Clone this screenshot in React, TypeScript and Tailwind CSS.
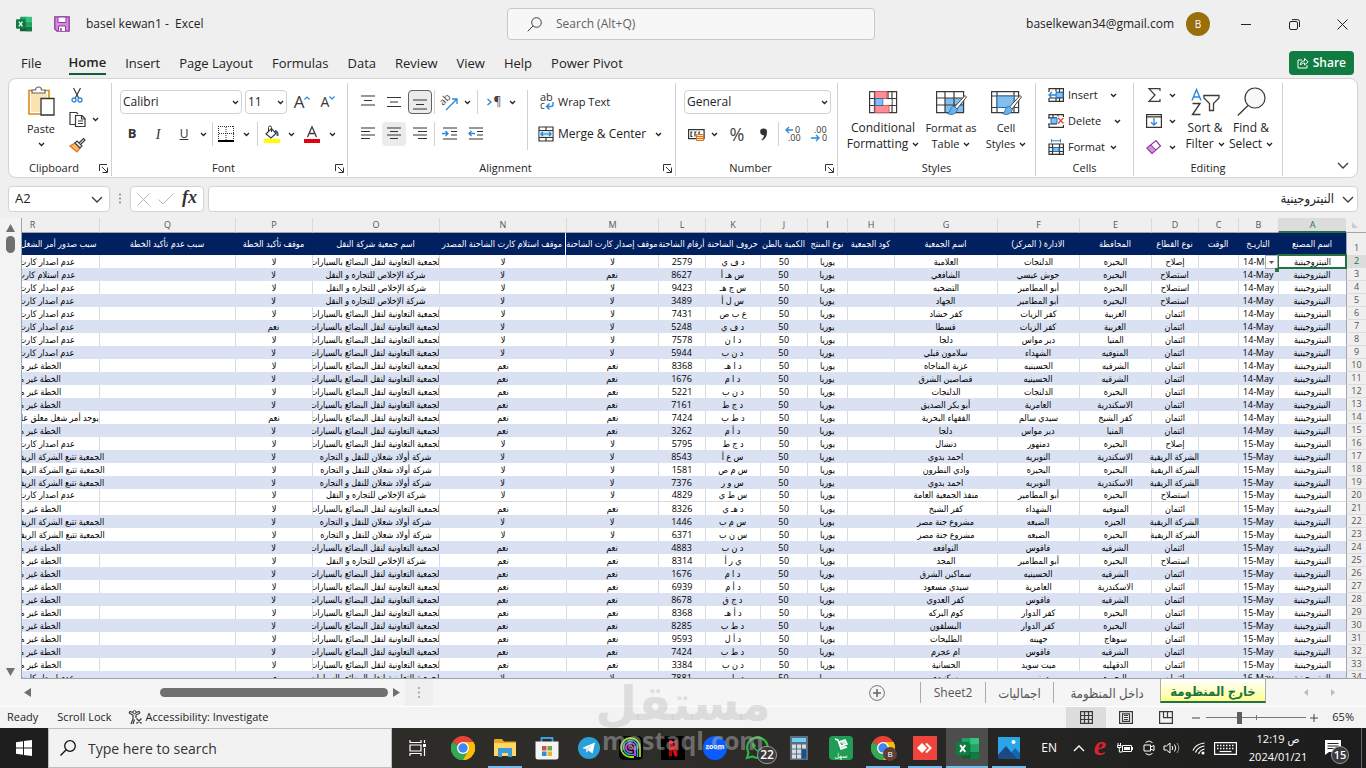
import type { ReactNode } from "react";
import clsx from "clsx";

/* ---------------- DATA ---------------- */

const COOP = "الجمعية التعاونية لنقل البضائع بالسيارات";
const IKHLAS = "شركة الإخلاص للتجاره و النقل";
const SHAALAN = "شركة أولاد شعلان للنقل و التجاره";
const RURAL = "الشركة الريفية";
const NO_CARD = "عدم اصدار كارت الشاحنة";
const NO_RECEIPT = "عدم استلام كارت الشاحنة";
const PLAN = "الخطة غير مؤكدة";
const PENDING = "يوجد أمر شغل معلق علي نفس الشاحنة";
const FOLLOWS = "الجمعية تتبع الشركة الريفية المصرية للتنمية";

const columns = [
  { id: "A", title: "اسم المصنع", width: "w-[68px]" },
  { id: "B", title: "التاريـخ", width: "w-[40px]" },
  { id: "C", title: "الوقت", width: "w-[40px]" },
  { id: "D", title: "نوع القطاع", width: "w-[47px]" },
  { id: "E", title: "المحافظة", width: "w-[72px]" },
  { id: "F", title: "الادارة ( المركز)", width: "w-[82px]" },
  { id: "G", title: "اسم الجمعية", width: "w-[103px]" },
  { id: "H", title: "كود الجمعية", width: "w-[47px]" },
  { id: "I", title: "نوع المنتج", width: "w-[40px]" },
  { id: "J", title: "الكمية بالطن", width: "w-[47px]" },
  { id: "K", title: "حروف الشاحنة", width: "w-[55px]" },
  { id: "L", title: "أرقام الشاحنة", width: "w-[47px]" },
  { id: "M", title: "موقف إصدار كارت الشاحنة", width: "w-[92px]" },
  { id: "N", title: "موقف استلام كارت الشاحنة المصدر", width: "w-[127px]" },
  { id: "O", title: "اسم جمعية شركة النقل", width: "w-[127px]" },
  { id: "P", title: "موقف تأكيد الخطة", width: "w-[77px]" },
  { id: "Q", title: "سبب عدم تأكيد الخطة", width: "w-[136px]" },
  { id: "R", title: "سبب صدور أمر الشغل للشاحنة الحالية", width: "w-[134px]" },
];

// sector, governorate, district, society, letters, number, issued, received, carrier, confirmed, reason
const records: string[][] = [
  ["إصلاح", "البحيره", "الدلنجات", "العلامية", "د ف ي", "2579", "لا", "لا", COOP, "لا", NO_CARD],
  ["استصلاح", "البحيره", "حوش عيسي", "الشافعي", "س هـ أ", "8627", "نعم", "لا", IKHLAS, "لا", NO_RECEIPT],
  ["استصلاح", "البحيره", "أبو المطامير", "التضحيه", "س ج هـ", "9423", "لا", "لا", IKHLAS, "لا", NO_CARD],
  ["استصلاح", "البحيره", "أبو المطامير", "الجهاد", "س ل أ", "3489", "لا", "لا", IKHLAS, "لا", NO_CARD],
  ["ائتمان", "الغربية", "كفر الزيات", "كفر حشاد", "ع ب ص", "7431", "لا", "لا", COOP, "لا", NO_CARD],
  ["ائتمان", "الغربية", "كفر الزيات", "قسطا", "د ف ي", "5248", "لا", "لا", COOP, "نعم", NO_CARD],
  ["ائتمان", "المنيا", "دير مواس", "دلجا", "د ا ن", "7578", "لا", "لا", COOP, "لا", NO_CARD],
  ["ائتمان", "المنوفيه", "الشهداء", "سلامون قبلي", "د ن ب", "5944", "لا", "لا", COOP, "لا", NO_CARD],
  ["ائتمان", "الشرقيه", "الحسينيه", "عزبة المناجاه", "د ا هـ", "8368", "نعم", "نعم", COOP, "لا", PLAN],
  ["ائتمان", "الشرقيه", "الحسينيه", "قصاصين الشرق", "د ا م", "1676", "نعم", "نعم", COOP, "لا", PLAN],
  ["ائتمان", "البحيره", "الدلنجات", "الدلنجات", "د ن ب", "5221", "نعم", "نعم", COOP, "لا", PLAN],
  ["ائتمان", "الاسكندرية", "العامرية", "أبو بكر الصديق", "د ج ط", "7161", "نعم", "نعم", COOP, "لا", PLAN],
  ["ائتمان", "كفر الشيخ", "سيدي سالم", "الفقهاء البحرية", "د ط ب", "7424", "نعم", "نعم", COOP, "نعم", PENDING],
  ["ائتمان", "المنيا", "دير مواس", "دلجا", "د أ م", "3262", "نعم", "نعم", COOP, "لا", PLAN],
  ["إصلاح", "البحيره", "دمنهور", "دنشال", "د ج ط", "5795", "لا", "لا", COOP, "لا", NO_CARD],
  [RURAL, "الاسكندرية", "النوبريه", "احمد بدوي", "س ع أ", "8543", "لا", "لا", SHAALAN, "لا", FOLLOWS],
  [RURAL, "البحيره", "البحيره", "وادي النطرون", "س م ص", "1581", "لا", "لا", SHAALAN, "لا", FOLLOWS],
  [RURAL, "الاسكندرية", "النوبريه", "احمد بدوي", "س و ر", "7376", "لا", "لا", SHAALAN, "لا", FOLLOWS],
  ["استصلاح", "البحيره", "أبو المطامير", "منفذ الجمعية العامة", "س ط ي", "4829", "لا", "لا", IKHLAS, "لا", NO_CARD],
  ["ائتمان", "المنوفيه", "الشهداء", "كفر الشيخ", "د هـ ي", "8326", "نعم", "نعم", COOP, "لا", PLAN],
  [RURAL, "الجيزه", "الضبعه", "مشروع جنة مصر", "س م ب", "1446", "لا", "لا", SHAALAN, "لا", FOLLOWS],
  [RURAL, "البحيره", "الضبعه", "مشروع جنة مصر", "س ن ب", "6371", "لا", "لا", SHAALAN, "لا", FOLLOWS],
  ["ائتمان", "الشرقيه", "فاقوس", "النوافعه", "د ن ب", "4883", "نعم", "نعم", COOP, "لا", PLAN],
  ["استصلاح", "البحيره", "أبو المطامير", "المجد", "ي ر أ", "8314", "نعم", "نعم", IKHLAS, "لا", PLAN],
  ["ائتمان", "الشرقيه", "الحسينيه", "سماكين الشرق", "د ا م", "1676", "نعم", "نعم", COOP, "لا", PLAN],
  ["ائتمان", "الاسكندرية", "العامرية", "سيدي مسعود", "د أ م", "6939", "نعم", "نعم", COOP, "لا", PLAN],
  ["ائتمان", "الشرقيه", "فاقوس", "كفر العدوي", "د ج ق", "8678", "نعم", "نعم", COOP, "لا", PLAN],
  ["ائتمان", "البحيره", "كفر الدوار", "كوم البركه", "د أ هـ", "8368", "نعم", "نعم", COOP, "لا", PLAN],
  ["ائتمان", "البحيره", "كفر الدوار", "البسلقون", "د ط ب", "8285", "نعم", "نعم", COOP, "لا", PLAN],
  ["ائتمان", "سوهاج", "جهينه", "الطليحات", "د أ ل", "9593", "نعم", "نعم", COOP, "لا", PLAN],
  ["ائتمان", "الشرقيه", "فاقوس", "ام عجرم", "د ط ب", "7424", "نعم", "نعم", COOP, "لا", PLAN],
  ["ائتمان", "الدقهليه", "ميت سويد", "الحسانية", "د ن ب", "3384", "نعم", "نعم", COOP, "لا", PLAN],
  ["ائتمان", "البحيره", "دمنهور", "سكنيده", "د ط ب", "7881", "لا", "لا", COOP, "نعم", NO_CARD],
];

const rows = records.map((r, i) => {
  const n = i + 2;
  const date = n < 16 ? "14-May" : n < 34 ? "15-May" : "16-May";
  return {
    n,
    banded: n < 20 ? n % 2 === 1 : n > 21 && n % 2 === 0,
    cells: ["النيتروجينية", date, "", r[0], r[1], r[2], r[3], "", "يوريا", "50", r[4], r[5], r[6], r[7], r[8], r[9], "", r[10]],
  };
});

/* ---------------- SMALL ICONS ---------------- */

type SvgProps = { w: number; h: number; children: ReactNode; className?: string };

function Svg({ w, h, children, className }: SvgProps) {
  return (
    <svg
      width={w}
      height={h}
      viewBox={`0 0 ${w} ${h}`}
      fill="none"
      stroke="#3b3a39"
      strokeWidth="1"
      aria-hidden="true"
      className={clsx("shrink-0 overflow-visible", className)}
    >
      {children}
    </svg>
  );
}

function Chevron({ className }: { className?: string }) {
  return (
    <Svg w={7} h={5} className={className}>
      <path d="M1 1l2.5 2.5L6 1" strokeWidth="1.3" stroke="#222" />
    </Svg>
  );
}

function BigChevron() {
  return (
    <Svg w={12} h={7}>
      <path d="M1 1l5 5 5-5" strokeWidth="1.3" />
    </Svg>
  );
}

function Drop({ label, className }: { label: string; className?: string }) {
  return (
    <button aria-label={label} className={clsx("flex h-6 items-center justify-center", className ?? "w-3")}>
      <Chevron />
    </button>
  );
}

function Tool({ label, className, children }: { label: string; className?: string; children: ReactNode }) {
  return (
    <button
      aria-label={label}
      className={clsx("flex h-6 shrink-0 items-center justify-center rounded", className ?? "w-6")}
    >
      {children}
    </button>
  );
}

function Sep({ className }: { className?: string }) {
  return <span className={clsx("h-6 w-px shrink-0 bg-[#d1d1d1]", className)} />;
}

function Lines({ d }: { d: string }) {
  return (
    <Svg w={14} h={14}>
      <path d={d} strokeWidth="1.2" stroke="#333" />
    </Svg>
  );
}

function Group({ name, launcher, className, children }: { name: string; launcher?: boolean; className: string; children: ReactNode }) {
  return (
    <section aria-label={name} className={clsx("mt-1 mb-px flex flex-col border-r border-[#d1d1d1]", className)}>
      <div className="flex flex-1">{children}</div>
      <div className="flex h-4 items-center">
        <span className="flex-1 text-center">{name}</span>
        {launcher && (
          <button aria-label={`${name} settings`} className="mr-[3px]">
            <Svg w={9} h={9}>
              <path d="M.5 7V.5H8M3 3l5 5M8.500 3.500v5H3.500" stroke="#333" />
            </Svg>
          </button>
        )}
      </div>
    </section>
  );
}

/* ---------------- TITLE BAR ---------------- */

function ExcelLogo({ size }: { size: number }) {
  return (
    <svg width={size} height={size} viewBox="0 0 24 24" aria-hidden="true">
      <path d="M7 1h9v7H6V2a1 1 0 0 1 1-1z" fill="#21a366" />
      <path d="M15 1h8a1 1 0 0 1 1 1v6h-9z" fill="#33c481" />
      <path d="M6 8h9v8H6z" fill="#107c41" />
      <path d="M15 8h9v8h-9z" fill="#21a366" />
      <path d="M6 16h18v6a1 1 0 0 1-1 1H7a1 1 0 0 1-1-1z" fill="#185c37" />
      <path d="M15 16h9v6a1 1 0 0 1-1 1h-8z" fill="#107c41" />
      <rect x="0" y="5" width="14" height="14" rx="1.500" fill="#107c41" />
      <path d="M4.300 8.500l5.400 7M9.700 8.500l-5.400 7" stroke="#fff" strokeWidth="1.900" />
    </svg>
  );
}

function TitleBar() {
  return (
    <header className="grid h-12 shrink-0 grid-cols-[1fr_368px_1fr] items-center pl-4">
      <div className="flex items-center">
        <ExcelLogo size={16} />
        <button aria-label="Save" className="ml-[22px]">
          <Svg w={16} h={16}>
            <path d="M.8.800h14.400v14.400H3L.8 13z" fill="#d68be0" stroke="#8b3a99" strokeWidth="1.300" />
            <path d="M4 1h8v5.500H4z" fill="#fff" stroke="#8b3a99" />
            <path d="M4.500 15v-5h7v5" fill="#fff" stroke="#8b3a99" />
            <path d="M7 12v3" stroke="#8b3a99" strokeWidth="1.500" />
          </Svg>
        </button>
        <h1 className="ml-4 text-[12px] whitespace-pre">basel kewan1 -  Excel</h1>
      </div>
      <label className="flex h-8 items-center rounded border border-[#c8c8c8] bg-[#f7f7f7] pl-[19px]">
        <Svg w={15} h={15}>
          <circle cx="9.500" cy="5.500" r="4.800" />
          <path d="M6 9L.7 14.300" />
        </Svg>
        <input aria-label="Search" placeholder="Search (Alt+Q)" className="ml-3.5 flex-1 bg-transparent text-[12px] outline-none placeholder:text-[#616161]" />
      </label>
      <div className="flex items-center justify-end">
        <span className="text-[12px]">baselkewan34@gmail.com</span>
        <button className="ml-3 size-6 rounded-full bg-[#986f0b] text-[10px] text-white">B</button>
        <button aria-label="Minimize" className="flex h-12 w-[60px] items-center justify-center pl-3">
          <Svg w={10} h={10}><path d="M0 5.500h10" stroke="#222" /></Svg>
        </button>
        <button aria-label="Restore" className="flex h-12 w-12 items-center justify-center">
          <Svg w={11} h={11}>
            <rect x=".5" y="2.500" width="8" height="8" rx="1.500" stroke="#222" />
            <path d="M3 .6h5.500a2 2 0 0 1 2 2V8" stroke="#222" />
          </Svg>
        </button>
        <button aria-label="Close" className="flex h-12 w-12 items-center justify-center">
          <Svg w={11} h={11}><path d="M.5.500l10 10M10.500.500l-10 10" stroke="#222" /></Svg>
        </button>
      </div>
    </header>
  );
}

/* ---------------- RIBBON ---------------- */

const tabs = ["File", "Home", "Insert", "Page Layout", "Formulas", "Data", "Review", "View", "Help", "Power Pivot"];

function RibbonTabs() {
  return (
    <nav className="flex h-[30px] shrink-0 items-start gap-[19px] pl-[21px] pr-3 text-[13px]">
      {tabs.map((tab) => (
        <button
          key={tab}
          className={clsx(
            "h-[27px] pt-[3px] leading-[22px]",
            tab === "File" && "mr-2",
            tab === "Home" && "border-b-2 border-[#185c37] font-semibold"
          )}
        >
          {tab}
        </button>
      ))}
      <button className="ml-auto mt-[3px] flex h-6 items-center gap-1 rounded bg-[#107c41] pr-2 pl-2 text-[12px] font-semibold text-white">
        <Svg w={12} h={12}>
          <path d="M5 3H1v8h9V8" stroke="#fff" />
          <path d="M3.500 8C3.500 5 5 4 7.500 4V1.500l3.700 3.300-3.700 3.200V6C6 6 4.500 6.500 3.500 8z" stroke="#fff" />
        </Svg>
        Share
      </button>
    </nav>
  );
}

function ClipboardGroup() {
  return (
    <Group name="Clipboard" launcher className="w-[103px]">
      <button className="ml-4 flex w-8 flex-col items-center whitespace-nowrap">
        <Svg w={28} h={32} className="mt-[3px]">
          <path d="M8 4.500H2V28h12M17 4.500h5V12" stroke="#d68a1a" strokeWidth="1.600" />
          <path d="M4 7h16v5h-6v14H4z" fill="#fbe3b4" stroke="none" />
          <path d="M5 7V4h3.500a3 3 0 0 1 6 0H18v3z" fill="#fff" stroke="#666" strokeWidth="1.200" />
          <path d="M14 12.500h13V29H14z" fill="#fff" stroke="#333" strokeWidth="1.300" />
        </Svg>
        <span className="mt-0.5 leading-[18px]">Paste</span>
        <Chevron className="mt-1" />
      </button>
      <div className="ml-2 flex flex-col">
        <Tool label="Cut">
          <Svg w={14} h={16}>
            <path d="M3.500 1l5.200 10M10.500 1L5.300 11" strokeWidth="1.200" />
            <circle cx="4" cy="13" r="2" stroke="#2b88d8" strokeWidth="1.300" />
            <circle cx="10" cy="13" r="2" stroke="#2b88d8" strokeWidth="1.300" />
          </Svg>
        </Tool>
        <div className="flex">
          <Tool label="Copy">
            <Svg w={17} h={17}>
              <path d="M6 13.500H1V1.500h6.500L9 3" strokeWidth="1.200" />
              <path d="M6.500 4.500H13l3 3V15.500H6.500zM12.500 4.500v3.500H16M9 10h5M9 12.500h5" strokeWidth="1.200" />
            </Svg>
          </Tool>
          <Drop label="Copy options" />
        </div>
        <Tool label="Format Painter" className="mt-0.5 w-6">
          <Svg w={17} h={16}>
            <path d="M1 9l5-3 5 5-3 4z" fill="#f7b96b" stroke="#d9731a" strokeWidth="1.200" />
            <path d="M6 6l2-2 5 5-2 2zM10 6l4.500-4.500 1.500 1.500L12 7" fill="#fff" strokeWidth="1.200" />
          </Svg>
        </Tool>
      </div>
    </Group>
  );
}

const selectBox = "flex h-6 items-center rounded border border-[#d1d1d1] bg-white pr-0.5 text-[12px]";
const selectField = "min-w-0 flex-1 appearance-none bg-transparent pl-0.5 outline-none";

function FontGroup() {
  return (
    <Group name="Font" launcher className="w-[236px]">
      <div className="mt-[7px] ml-2 flex flex-col gap-2">
        <div className="flex items-center">
          <label className={clsx(selectBox, "w-[122px]")}>
            <select aria-label="Font name" className={selectField}><option>Calibri</option></select>
            <Chevron />
          </label>
          <label className={clsx(selectBox, "ml-[3px] w-[42px]")}>
            <select aria-label="Font size" className={selectField}><option>11</option></select>
            <Chevron />
          </label>
          <Tool label="Increase font size" className="ml-0.5 w-[26px]">
            <span className="text-[17px] leading-5 text-[#3b3a39]">A</span>
            <Svg w={6} h={4} className="mb-2"><path d="M.5 3.500L3 1l2.500 2.500" stroke="#2b88d8" strokeWidth="1.200" /></Svg>
          </Tool>
          <Tool label="Decrease font size" className="w-[26px]">
            <span className="text-[14px] leading-5 text-[#3b3a39]">A</span>
            <Svg w={6} h={4} className="mb-2"><path d="M.5.500L3 3 5.500.500" stroke="#2b88d8" strokeWidth="1.200" /></Svg>
          </Tool>
        </div>
        <div className="flex items-center">
          <Tool label="Bold"><b className="text-[13px] text-[#333]">B</b></Tool>
          <Tool label="Italic" className="ml-0.5 w-6"><i className="font-['Liberation_Serif',serif] text-[14px] text-[#333]">I</i></Tool>
          <Tool label="Underline" className="ml-0.5 w-6"><u className="text-[12px] text-[#333]">U</u></Tool>
          <Drop label="Underline options" className="w-3.5" />
          <Sep className="mx-0.5" />
          <Tool label="Borders" className="w-[22px]">
            <Svg w={16} h={16}>
              <path d="M.5 0v14M15.500 0v14M0 .5h16M8 1v13M1 7.500h15" strokeDasharray="1 1" stroke="#333" />
              <path d="M0 15h16" stroke="#000" strokeWidth="2" />
            </Svg>
          </Tool>
          <Drop label="Border options" className="w-[18px]" />
          <Sep className="mx-0.5" />
          <Tool label="Fill color">
            <Svg w={18} h={17}>
              <path d="M3 8l5.500-5.500 4.500 5L8 12z" strokeWidth="1.200" />
              <path d="M8.500 6V1.500a1.500 1.500 0 0 0-3 0V5" />
              <path d="M12 5c2 0 3 2 2.500 5" stroke="#1f5f9c" strokeWidth="2" />
              <path d="M1 13h16v4H1z" fill="#ffff00" stroke="none" />
            </Svg>
          </Tool>
          <Drop label="Fill options" className="w-3.5" />
          <Tool label="Font color" className="ml-0.5 w-6">
            <Svg w={16} h={17}>
              <path d="M3.500 11L8 .8 12.500 11M5 7.500h6" strokeWidth="1.300" />
              <path d="M0 13h16v4H0z" fill="#e3000f" stroke="none" />
            </Svg>
          </Tool>
          <Drop label="Font color options" className="w-4" />
        </div>
      </div>
    </Group>
  );
}

function AlignmentGroup() {
  return (
    <Group name="Alignment" launcher className="w-[328px]">
      <div className="mt-[7px] ml-2 flex w-[171px] flex-col gap-2">
        <div className="flex items-center">
          <Tool label="Top align"><Lines d="M0 1h14M3 5.500h8M0 10h14" /></Tool>
          <Tool label="Middle align" className="ml-0.5 w-6"><Lines d="M0 2.500h14M3 7h8M0 11.500h14" /></Tool>
          <Tool label="Bottom align" className="ml-0.5 w-6 border border-[#616161] bg-[#ebebeb]"><Lines d="M0 5h14M3 9.500h8M0 14h14" /></Tool>
          <Sep className="mx-0.5" />
          <Tool label="Orientation">
            <Svg w={18} h={17}>
              <text x="3" y="12" fontSize="10" transform="rotate(-45 3 12)" fill="#444" stroke="none">ab</text>
              <path d="M6 16L16.500 5.500M12 5h5v5" stroke="#2b88d8" strokeWidth="1.300" />
            </Svg>
          </Tool>
          <Drop label="Orientation options" className="w-3" />
          <Sep className="mx-1" />
          <Tool label="Text direction" className="w-6 gap-0.5">
            <Svg w={5} h={8}><path d="M.5 1L4 4 .5 7" stroke="#2b88d8" strokeWidth="1.400" /></Svg>
            <span className="text-[12px] text-[#444]">¶</span>
          </Tool>
          <Drop label="Direction options" className="w-3" />
        </div>
        <div className="flex items-center">
          <Tool label="Align left"><Lines d="M0 1h14M0 4.500h9M0 8h14M0 11.500h9" /></Tool>
          <Tool label="Center" className="ml-0.5 w-6 bg-[#ebebeb]"><Lines d="M0 1h14M3 4.500h8M0 8h14M3 11.500h8" /></Tool>
          <Tool label="Align right" className="ml-0.5 w-6"><Lines d="M0 1h14M5 4.500h9M0 8h14M5 11.500h9" /></Tool>
          <Sep className="mx-0.5" />
          <Tool label="Decrease indent">
            <Svg w={15} h={14}>
              <path d="M1 1h14M9 4.500h6M9 8h6M1 12h14" strokeWidth="1.200" stroke="#333" />
              <path d="M0 6.500h6M3.500 4L6 6.500 3.500 9" stroke="#2b88d8" strokeWidth="1.400" />
            </Svg>
          </Tool>
          <Tool label="Increase indent" className="ml-0.5 w-6">
            <Svg w={15} h={14}>
              <path d="M1 1h14M9 4.500h6M9 8h6M1 12h14" strokeWidth="1.200" stroke="#333" />
              <path d="M7 6.500H1M3.500 4L1 6.500 3.500 9" stroke="#2b88d8" strokeWidth="1.400" />
            </Svg>
          </Tool>
        </div>
      </div>
      <div className="mt-[7px] mb-2.5 flex flex-col gap-2 border-l border-[#d1d1d1] pl-3">
        <button className="flex h-6 items-center gap-1 text-[12px] text-[#222]">
          <Svg w={14} h={18}>
            <text x="0" y="8" fontSize="11" fill="#333" stroke="none">ab</text>
            <text x="0" y="16" fontSize="10" fill="#333" stroke="none">c</text>
            <path d="M13 9v2.500q0 2-2 2H7M9.500 10.500l-3 3 3 3" stroke="#2b88d8" strokeWidth="1.400" />
          </Svg>
          <span className="text-[11px]">Wrap Text</span>
        </button>
        <div className="flex items-center">
          <button className="flex h-6 items-center gap-1 whitespace-nowrap text-[#222]">
            <Svg w={16} h={16} className="-ml-0.5">
              <path d="M1 1h14v14H1zM1 4.500h14M1 11.500h14M8 1v3.500M8 11.500V15" strokeWidth="1.200" stroke="#333" />
              <path d="M1.600 5h12.800v6H1.600z" fill="#cfe8fb" stroke="none" />
              <path d="M3 8h10M5 6L3 8l2 2M11 6l2 2-2 2" stroke="#1f7fc4" strokeWidth="1.200" />
            </Svg>
            <span className="text-[12px]">Merge &amp; Center</span>
          </button>
          <Drop label="Merge options" className="ml-1.5 w-3" />
        </div>
      </div>
    </Group>
  );
}

function NumberGroup() {
  return (
    <Group name="Number" launcher className="w-[162px]">
      <div className="mt-[7px] mx-2 flex flex-1 flex-col gap-2">
        <label className={selectBox}>
          <select aria-label="Number format" className={selectField}><option>General</option></select>
          <Chevron />
        </label>
        <div className="flex items-center">
          <Tool label="Accounting format">
            <Svg w={17} h={15}>
              <path d="M.6 2.600h15.500v9H.6zM4.500 5H3v4.500h1.500M8.500 5H7v4.500M12 5h-1v2" strokeWidth="1.200" stroke="#333" />
              <path d="M8.500 7.500h7V13.500h-7zM8.500 9.500h7M8.500 11.500h7" fill="#fde3c3" stroke="#d9731a" />
            </Svg>
          </Tool>
          <Drop label="Accounting options" className="w-3" />
          <Tool label="Percent style" className="ml-1 w-[26px]"><span className="text-[18px] text-[#444]">%</span></Tool>
          <Tool label="Comma style" className="w-[26px]">
            <Svg w={9} h={13}>
              <path d="M4.500.500a3.300 3.300 0 0 1 3.500 4c0 4-2 6.500-5 8l-.6-.8C4.200 10.500 5 9 5 7.300 2.800 7.600 1.200 6 1.200 4a3.300 3.300 0 0 1 3.300-3.500z" fill="#333" stroke="none" />
            </Svg>
          </Tool>
          <Sep className="mx-0.5" />
          <Tool label="Increase decimal">
            <Svg w={17} h={16}>
              <text x="10" y="7" fontSize="9" fill="#333" stroke="none">0</text>
              <text x="3" y="15" fontSize="9" fill="#333" stroke="none">.00</text>
              <path d="M8 4H1M4 1L1 4l3 3" stroke="#2b88d8" strokeWidth="1.300" />
            </Svg>
          </Tool>
          <Tool label="Decrease decimal" className="ml-0.5 w-6">
            <Svg w={17} h={16}>
              <text x="3" y="7" fontSize="9" fill="#333" stroke="none">.00</text>
              <text x="11" y="15" fontSize="9" fill="#333" stroke="none">0</text>
              <path d="M0 12h8M5 9l3 3-3 3" stroke="#2b88d8" strokeWidth="1.300" />
            </Svg>
          </Tool>
        </div>
      </div>
    </Group>
  );
}

function BigButton({ icon, top, bottom, className }: { icon: ReactNode; top: string; bottom: string; className: string }) {
  return (
    <button className={clsx("flex flex-col items-center whitespace-nowrap leading-4", className)}>
      <span className="flex h-[37px] items-center">{icon}</span>
      <span>{top}</span>
      <span className="flex items-center gap-1">{bottom}<Chevron /></span>
    </button>
  );
}

function Brush() {
  return (
    <>
      <path d="M30 7.500L19.500 19l2.500 2L31.500 9z" fill="#fff" stroke="#444" />
      <path d="M19.500 18.500c-3-.5-4 2-4.500 4.500-.5 1.500-2 2-3 2 3 2.500 9 2 10.500-3.500z" fill="#6cb3ea" stroke="#2672b8" />
    </>
  );
}

function StylesGroup() {
  return (
    <Group name="Styles" className="w-[198px]">
      <BigButton
        className="ml-2 w-[74px] text-[12px]"
        top="Conditional"
        bottom="Formatting"
        icon={
          <Svg w={28} h={24}>
            <path d="M.6 1.600h27v21H.6zM.6 8.500h27M.6 15.500h27M5.500 1.600v21M19 1.600v21M23 1.600v21" strokeWidth="1.200" />
            <path d="M6 1.600h12v6.900H6zM6 15.500h14v7H6z" fill="#ff8d96" stroke="#e05560" />
            <path d="M6 8.500h8v7H6z" fill="#83beec" stroke="#2672b8" />
            <path d="M14.500 9.200h8v5.600h-8z" fill="#fff" stroke="none" />
          </Svg>
        }
      />
      <BigButton
        className="w-[62px] text-[11px]"
        top="Format as"
        bottom="Table"
        icon={
          <Svg w={32} h={28}>
            <path d="M10 10h18v14H10z" fill="#83beec" stroke="none" />
            <path d="M1.600 3.600h27v21h-27zM1.600 10h27M1.600 17h27M10 3.600v21M19 3.600v21" strokeWidth="1.200" />
            <Brush />
          </Svg>
        }
      />
      <BigButton
        className="w-12 text-[11px]"
        top="Cell"
        bottom="Styles"
        icon={
          <Svg w={32} h={28}>
            <path d="M1.600 3.600h27v21h-27zM1.600 8h27M1.600 19.500h27M7 3.600v21M24 3.600v21" strokeWidth="1.200" />
            <path d="M7 8h17v11.500H7z" fill="#83beec" stroke="#2672b8" />
            <Brush />
          </Svg>
        }
      />
    </Group>
  );
}

function CellsGroup() {
  return (
    <Group name="Cells" className="w-[98px]">
      <div className="ml-3 flex flex-col gap-0.5">
        <div className="flex items-center">
          <button className="flex h-6 items-center gap-1">
            <Svg w={16} h={14}>
              <path d="M1 4V.6h14.400v12.800H1V10M8 .6v3M8 10v3.400M11.500.6v12.800M8 4.300h7.400M1 10h14.400" strokeWidth="1.200" stroke="#333" />
              <path d="M8 4.500h7v5H8z" fill="#83beec" stroke="#2672b8" />
              <path d="M8 7H1M4 4L1 7l3 3" stroke="#2b88d8" strokeWidth="1.300" />
            </Svg>
            Insert
          </button>
          <Drop label="Insert options" className="ml-2 w-4" />
        </div>
        <div className="flex items-center">
          <button className="flex h-6 items-center gap-1">
            <Svg w={16} h={14}>
              <path d="M1 3.500V.6h14.400V3M1 10v3.400h14.400V11M0 3.800h9M0 10h9M5 .6v3M10 .6v2" strokeWidth="1.200" stroke="#333" />
              <path d="M3 4h6v5.500H3z" fill="#83beec" stroke="#2672b8" />
              <path d="M10 4l5.500 5.500M15.500 4L10 9.500" stroke="#e0403c" strokeWidth="1.300" />
            </Svg>
            Delete
          </button>
          <Drop label="Delete options" className="ml-2 w-4" />
        </div>
        <div className="flex items-center">
          <button className="flex h-6 items-center gap-1">
            <Svg w={16} h={16}>
              <path d="M1 5h14.400v10.400H1zM1 8.500h14.400M1 12.500h14.400M4.500 5v10.400M11.500 5v10.400" stroke="#333" strokeWidth="1.200" />
              <path d="M5 8.500h6v4H5z" fill="#83beec" stroke="#2672b8" />
              <path d="M3.500 0v3.500M12.500 0v3.500M3.500 1.800h9" stroke="#2b88d8" />
            </Svg>
            Format
          </button>
          <Drop label="Format options" className="ml-0.5 w-3" />
        </div>
      </div>
    </Group>
  );
}

function EditingGroup() {
  return (
    <Group name="Editing" className="w-[149px]">
      <div className="ml-2 flex flex-col gap-0.5">
        <div className="flex">
          <Tool label="AutoSum">
            <Svg w={13} h={14}><path d="M12 3V.7H1L7 7l-6 6.300h11V11" strokeWidth="1.200" /></Svg>
          </Tool>
          <Drop label="AutoSum options" className="w-3" />
        </div>
        <div className="flex">
          <Tool label="Fill">
            <Svg w={16} h={14}>
              <path d="M.6.600h14.800v12.800H.6zM.6 2.800h14.800" strokeWidth="1.200" stroke="#333" />
              <path d="M8 4v7M5 8.200L8 11l3-2.800" stroke="#2b88d8" strokeWidth="1.300" />
            </Svg>
          </Tool>
          <Drop label="Fill series options" className="w-3" />
        </div>
        <div className="flex">
          <Tool label="Clear">
            <Svg w={16} h={16}>
              <path d="M1 9l5 5.500 8.500-7.500-4.500-5.500z" stroke="#8b3a99" strokeWidth="1.200" fill="#fff" />
              <path d="M1 9l5 5.500 4-3.500-5-5.200z" fill="#d68be0" stroke="#8b3a99" />
            </Svg>
          </Tool>
          <Drop label="Clear options" className="w-3" />
        </div>
      </div>
      <BigButton
        className="ml-1 w-[46px] text-[12px]"
        top="Sort &"
        bottom="Filter"
        icon={
          <Svg w={29} h={28}>
            <path d="M1 12.500L5.500 1.500 10 12.500M2.500 9h6" stroke="#2b88d8" strokeWidth="1.400" />
            <path d="M1.500 15.500H9L1.500 26.500H9.500" strokeWidth="1.400" />
            <path d="M13 7.500h15v2.500l-5.500 5.500v7h-4v-7L13 10z" strokeWidth="1.300" />
          </Svg>
        }
      />
      <BigButton
        className="w-[46px] text-[12px]"
        top="Find &"
        bottom="Select"
        icon={
          <Svg w={29} h={29}>
            <circle cx="18" cy="11" r="10" strokeWidth="1.200" fill="#f8f8f8" />
            <path d="M11 18.500L.8 28.500" strokeWidth="1.300" />
          </Svg>
        }
      />
    </Group>
  );
}

function Ribbon() {
  return (
    <div className="mx-2 flex h-[100px] shrink-0 rounded-lg border border-[#d4d4d4] bg-white text-[11px]">
      <ClipboardGroup />
      <FontGroup />
      <AlignmentGroup />
      <NumberGroup />
      <StylesGroup />
      <CellsGroup />
      <EditingGroup />
      <button aria-label="Collapse ribbon" className="mt-auto ml-auto mr-2 mb-2"><BigChevron /></button>
    </div>
  );
}

/* ---------------- FORMULA BAR ---------------- */

function FormulaBar() {
  const box = "flex h-[26px] items-center rounded border border-[#d4d4d4] bg-white";
  return (
    <div className="mx-2 mt-2 mb-1.5 flex shrink-0 items-center">
      <label className={clsx(box, "w-[102px] px-1.5")}>
        <input aria-label="Name box" defaultValue="A2" className="w-0 flex-1 bg-transparent text-[13px] outline-none" />
        <BigChevron />
      </label>
      <Svg w={2} h={12} className="mx-[9px]">
        <path d="M0 1.500h2M0 5.500h2M0 9.500h2" stroke="#888" strokeWidth="1.500" />
      </Svg>
      <div className={clsx(box, "w-[74px] justify-between px-1.5")}>
        <button aria-label="Cancel"><Svg w={13} h={13}><path d="M.5.500l12 12M12.500.500l-12 12" stroke="#b5b5b5" /></Svg></button>
        <button aria-label="Enter"><Svg w={16} h={12}><path d="M.5 6.500L5 11 15.500.500" stroke="#b5b5b5" /></Svg></button>
        <button aria-label="Insert function" className="pb-1 font-['Liberation_Serif',serif] text-[18px] leading-5 font-bold text-[#333] italic">fx</button>
      </div>
      <label className={clsx(box, "ml-1 flex-1 pr-[3px]")}>
        <input aria-label="Formula" dir="rtl" defaultValue="النيتروجينية" className="w-0 flex-1 bg-transparent pr-2 text-[13px] outline-none" />
        <BigChevron />
      </label>
    </div>
  );
}

/* ---------------- GRID ---------------- */

function Sheet() {
  return (
    <main className="flex min-h-0 flex-1 bg-[#f3f3f3]">
      <div className="flex w-[21px] shrink-0 flex-col items-center pt-1.5 pb-[3px]">
        <Svg w={9} h={8}><path d="M4.500 0L9 8H0z" fill="#707070" stroke="none" /></Svg>
        <span className="mt-1 h-[17px] w-[9px] rounded-full bg-[#707070]" />
        <Svg w={9} h={8} className="mt-auto"><path d="M4.500 8L9 0H0z" fill="#707070" stroke="none" /></Svg>
      </div>
      <div dir="rtl" className="min-w-0 flex-1 overflow-hidden border-b border-l border-[#9fa5ad]">
        <table className="w-[1401px] table-fixed border-separate border-spacing-0 text-[9px] leading-3 whitespace-nowrap text-black">
          <thead>
            <tr className="h-[15px] bg-[#efefef] text-[9px] text-[#555]">
              <th aria-label="Select all" className="w-5 border-b border-[#a5a5a5] p-0">
                <Svg w={6} h={6} className="mr-2"><path d="M0 6V0l6 6z" fill="#ccc" stroke="none" /></Svg>
              </th>
              {columns.map((c) => (
                <th
                  key={c.id}
                  className={clsx(
                    "border-l border-b border-l-[#d9d9d9] p-0 font-normal",
                    c.width,
                    c.id === "A" ? "border-b-2 border-b-[#217346] bg-[#dcdcdc] text-[#217346]" : "border-b-[#a5a5a5]"
                  )}
                >
                  {c.id}
                </th>
              ))}
            </tr>
          </thead>
          <tbody>
            <tr className="h-[22px] bg-[#002060] text-white">
              <th className="border-l border-[#9fa5ad] bg-[#efefef] p-0 pt-2 text-[9px] font-normal text-[#555]">1</th>
              {columns.map((c) => (
                <th key={c.id} className={clsx("p-0 font-normal", c.id === "N" && "border-r border-white")}>
                  <div className="flex justify-center">{c.title}</div>
                </th>
              ))}
            </tr>
            {rows.map((row) => (
              <tr key={row.n} className={clsx("h-[13px]", row.banded ? "bg-[#d9e1f2]" : "bg-white")}>
                <th
                  className={clsx(
                    "border-b border-l border-b-[#dcdcdc] border-l-[#9fa5ad] p-0 text-[9px] font-normal",
                    row.n === 2 ? "bg-[#dcdcdc] text-[#217346]" : "bg-[#efefef] text-[#555]"
                  )}
                >
                  {row.n}
                </th>
                {row.cells.map((value, i) => (
                  <td
                    key={i}
                    className={clsx(
                      "relative p-0",
                      !row.banded && !(i === 16 && row.cells[17] === FOLLOWS) && "border-l border-[#d6dae2]",
                      row.n === 20 && "border-b border-b-[#d6dae2]",
                      row.n === 2 && i === 0 && "outline-2 -outline-offset-1 outline-[#217346]"
                    )}
                  >
                    <div className={clsx("flex h-3 justify-center", i === 14 && "overflow-hidden")}>
                      <bdi className="shrink-0">{value}</bdi>
                    </div>
                    {row.n === 2 && i === 0 && <span className="absolute -bottom-1 -left-1 z-10 size-1 bg-[#217346]" />}
                    {row.n === 2 && i === 1 && (
                      <button aria-label="Open list" className="absolute top-0 right-0 flex h-3.5 w-[13px] items-center justify-center border border-[#ababab] bg-white">
                        <Svg w={5} h={3}><path d="M0 0h5L2.500 3z" fill="#555" stroke="none" /></Svg>
                      </button>
                    )}
                  </td>
                ))}
              </tr>
            ))}
          </tbody>
        </table>
      </div>
    </main>
  );
}

/* ---------------- SHEET TABS AND STATUS ---------------- */

function SheetTabs() {
  const tab = "my-[3px] border-l border-[#ababab] leading-[18px] text-[#555]";
  return (
    <div className="flex h-[27px] shrink-0 items-stretch bg-[#f5f5f5] text-[13px]">
      <div className="flex w-[405px] items-center pr-[5px] pl-6">
        <Svg w={7} h={9}><path d="M7 0v9L0 4.500z" fill="#707070" stroke="none" /></Svg>
        <span className="ml-auto h-[9px] w-[228px] rounded-full bg-[#707070]" />
        <Svg w={7} h={9} className="ml-[5px]"><path d="M0 0v9l7-4.500z" fill="#707070" stroke="none" /></Svg>
      </div>
      <div className="flex w-7 items-center justify-center bg-[#efefef]">
        <Svg w={2} h={11}><path d="M0 1h2M0 5.500h2M0 10h2" stroke="#999" strokeWidth="1.500" /></Svg>
      </div>
      <button aria-label="New sheet" className="mr-[35px] ml-auto">
        <Svg w={16} h={16}><path d="M8 4v8M4 8h8" strokeWidth="1.500" stroke="#666" /><circle cx="8" cy="8" r="7.400" stroke="#777" /></Svg>
      </button>
      <button className={clsx(tab, "w-[65px] text-[12px]")}>Sheet2</button>
      <button className={clsx(tab, "w-[68px]")}>اجماليات</button>
      <button className={clsx(tab, "w-[107px]")}>داخل المنظومة</button>
      <button className="mb-[3px] w-[106px] border-x border-b-2 border-x-[#ababab] border-b-[#217346] bg-linear-to-b from-white to-[#ffff8a] leading-6 font-bold text-[#217346]">خارج المنظومة</button>
      <div className="flex w-[100px] items-center gap-[23px] pl-[38px]">
        <Svg w={4} h={7}><path d="M4 0v7L0 3.500z" fill="#bbb" stroke="none" /></Svg>
        <Svg w={4} h={7}><path d="M0 0v7l4-3.500z" fill="#bbb" stroke="none" /></Svg>
      </div>
    </div>
  );
}

function StatusBar() {
  return (
    <div className="flex h-[22px] shrink-0 items-center border-t border-white bg-[#f3f3f3] pl-[7px] text-[11px]">
      <span>Ready</span>
      <span className="ml-[19px]">Scroll Lock</span>
      <button className="ml-4 flex items-center gap-[3px]">
        <Svg w={15} h={15}>
          <circle cx="6.500" cy="2.200" r="1.600" />
          <path d="M1 3l4 2v4l-2 5M12 3L8 5v3M1 3l1-1.500 3 1M12 3l-1-1.500-3 1M6.500 9.500L5 14M8.500 8.500l5 5M13.500 8.500l-5 5" strokeWidth="1.200" />
        </Svg>
        Accessibility: Investigate
      </button>
      <button aria-label="Normal view" className="ml-auto flex h-full w-10 items-center justify-center bg-[#dcdcdc]">
        <Svg w={13} h={13}><path d="M.6.600h11.800v11.800H.6zM.6 4.500h11.800M.6 8.500h11.800M4.500.600v11.800M8.500.600v11.800" strokeWidth="1.200" /></Svg>
      </button>
      <button aria-label="Page layout view" className="flex h-full w-10 items-center justify-center">
        <Svg w={14} h={13}><path d="M.6.600h12.800v11.800H.6zM3.500 2.800h7v7.500h-7zM5 4.500h4M5 6.500h4M5 8.500h4" strokeWidth="1.200" /></Svg>
      </button>
      <button aria-label="Page break view" className="flex h-full w-10 items-center justify-center">
        <Svg w={14} h={13}><path d="M.6.600h12.800v11.800H.6zM4.500.600v6h9M8.500.600v6" strokeWidth="1.200" /></Svg>
      </button>
      <button aria-label="Zoom out" className="ml-1.5"><Svg w={8} h={8}><path d="M0 4h8" stroke="#444" /></Svg></button>
      <input
        type="range"
        aria-label="Zoom"
        min={10}
        max={120}
        defaultValue={45}
        className="ml-1.5 h-3 w-[100px] appearance-none bg-[linear-gradient(#777,#777),linear-gradient(#777,#777)] bg-[length:100%_1px,1px_5px] bg-center bg-no-repeat [&::-webkit-slider-thumb]:h-3 [&::-webkit-slider-thumb]:w-[5px] [&::-webkit-slider-thumb]:appearance-none [&::-webkit-slider-thumb]:bg-[#5f5f5f]"
      />
      <button aria-label="Zoom in" className="ml-1"><Svg w={8} h={8}><path d="M0 4h8M4 0v8" stroke="#444" /></Svg></button>
      <span className="mr-3 ml-3.5">65%</span>
    </div>
  );
}

/* ---------------- TASKBAR ---------------- */

function Chrome() {
  return (
    <svg width="24" height="24" viewBox="0 0 24 24" aria-hidden="true">
      <path d="M12 12L1.600 6A12 12 0 0 1 22.400 6z" fill="#ea4335" />
      <path d="M12 12l10.400-6A12 12 0 0 1 12 24z" fill="#fbbc05" />
      <path d="M12 12v12A12 12 0 0 1 1.600 6z" fill="#34a853" />
      <path d="M12 6h10.400A12 12 0 0 1 12 24l5-9z" fill="#fbbc05" />
      <path d="M1.600 6A12 12 0 0 0 12 24l5.200-9H6.800z" fill="#34a853" />
      <circle cx="12" cy="12" r="6" fill="#fff" />
      <circle cx="12" cy="12" r="4.700" fill="#4285f4" />
    </svg>
  );
}

function Explorer() {
  return (
    <svg width="22" height="20" viewBox="0 0 22 20" aria-hidden="true">
      <path d="M0 2a1 1 0 0 1 1-1h7l2 2.500h12V18H0z" fill="#e8a81c" />
      <path d="M0 5h22v13H0z" fill="#ffd667" />
      <path d="M4 10h14v9h-4v-4H8v4H4z" fill="#3f9bd8" />
    </svg>
  );
}

function Store() {
  return (
    <svg width="24" height="24" viewBox="0 0 24 24" aria-hidden="true">
      <path d="M6.500 6V2h11v4" fill="none" stroke="#3aa0dc" strokeWidth="1.800" />
      <path d="M.5 5.500h23V21a2.500 2.500 0 0 1-2.500 2.500H3A2.500 2.500 0 0 1 .5 21z" fill="#f4f4f4" />
      <path d="M7 10h4.500v4.500H7z" fill="#d35230" />
      <path d="M12.500 10H17v4.500h-4.500z" fill="#6cab3c" />
      <path d="M7 15.500h4.500V20H7z" fill="#2f8fd3" />
      <path d="M12.500 15.500H17V20h-4.500z" fill="#eab32a" />
    </svg>
  );
}

function Telegram() {
  return (
    <svg width="22" height="22" viewBox="0 0 22 22" aria-hidden="true">
      <circle cx="11" cy="11" r="11" fill="#2a9fd8" />
      <path d="M4 11L17 5.500 14.500 16.500l-4-3-2 2-.5-3.500z" fill="#fff" />
      <path d="M8 12l6.500-4.500-4.500 5.500-1.500 2.500z" fill="#c5dfee" />
    </svg>
  );
}

function Spiral() {
  return (
    <svg width="24" height="24" viewBox="0 0 24 24" aria-hidden="true">
      <rect width="24" height="24" rx="5" fill="#050505" />
      <path d="M21 21V11.500a9.500 9.500 0 1 0-9.500 9.500H15" fill="none" stroke="#9be02c" strokeWidth="1.800" />
      <path d="M18.500 21V11.500a7 7 0 1 0-7 7H15" fill="none" stroke="#27b3c9" strokeWidth="1.500" />
      <path d="M16 20v-8.500a4.500 4.500 0 1 0-4.500 4.500h2" fill="none" stroke="#b04fd0" strokeWidth="2" />
      <circle cx="11.500" cy="11.500" r="2" fill="none" stroke="#d94f9b" />
    </svg>
  );
}

function Netflix() {
  return (
    <svg width="24" height="24" viewBox="0 0 24 24" aria-hidden="true">
      <path d="M0 0h24v24H0z" fill="#000" />
      <path d="M8 4h3v16l-3 .4zM13.500 4h3v16.400l-3-.4z" fill="#b0060f" />
      <path d="M8 4h3l5.500 16.400-3-.4z" fill="#e50914" />
    </svg>
  );
}

function Calculator() {
  return (
    <svg width="18" height="24" viewBox="0 0 18 24" aria-hidden="true">
      <path d="M0 0h18v24H0z" fill="#5d6e80" />
      <path d="M2 2h14v4H2z" fill="#6fd0f5" />
      <path d="M2 8.500h4v4H2zM7 8.500h4v4H7zM12 8.500h4v4h-4zM2 13.500h4v4H2zM7 13.500h4v4H7zM2 18.500h4v4H2zM7 18.500h4v4H7z" fill="#d8dde2" />
      <path d="M12 13.500h4v9h-4z" fill="#1a4f8f" />
    </svg>
  );
}

function WhatsApp() {
  return (
    <svg width="24" height="24" viewBox="0 0 24 24" aria-hidden="true" fill="none">
      <path d="M2 22l1.500-5.500A10.200 10.200 0 1 1 7.500 20.500z" stroke="#2bb741" strokeWidth="2.200" />
      <path d="M8.500 6.500c-2 1-1.500 4 1 6.700s6 4.300 7.500 2l-2.500-2-1.500 1c-1.500-.7-2.500-1.700-3-3l1-1.500z" fill="#2bb741" />
    </svg>
  );
}

function Photos() {
  return (
    <svg width="22" height="22" viewBox="0 0 22 22" aria-hidden="true">
      <path d="M0 0h22v22H0z" fill="#2aa6e8" />
      <path d="M8 22l9-11 5 5v6z" fill="#1467ad" />
      <path d="M0 18l8-9 11 13H0z" fill="#1b4a82" />
      <circle cx="15.500" cy="5" r="2" fill="#fff" />
    </svg>
  );
}

const badge = "absolute flex items-center justify-center rounded-full";

const apps: { name: string; icon: ReactNode; state?: "open" | "active" }[] = [
  { name: "Chrome", icon: <Chrome /> },
  { name: "File Explorer", icon: <Explorer />, state: "open" },
  { name: "Store", icon: <Store /> },
  { name: "Telegram", icon: <Telegram /> },
  { name: "Downloader", icon: <Spiral /> },
  { name: "Netflix", icon: <Netflix /> },
  {
    name: "Zoom",
    icon: <span className="flex size-6 items-center justify-center rounded-full bg-[#0b5cff] pb-px text-[7px] font-bold text-white">zoom</span>,
  },
  {
    name: "WhatsApp",
    icon: (
      <>
        <WhatsApp />
        <span className={clsx(badge, "top-2.5 left-3 h-[18px] w-5 border border-[#999] bg-[#3a3a3a] text-[12px] font-semibold text-white")}>22</span>
      </>
    ),
  },
  { name: "Calculator", icon: <Calculator /> },
  {
    name: "Cashier",
    icon: (
      <span className="flex size-6 flex-col items-center rounded-sm bg-[#1f9d55]">
        <Svg w={14} h={15} className="mt-px">
          <path d="M1 2l3 1 3 9 6-2M5 5l6-2 2 4-6 2z" stroke="#fff" strokeWidth="1.500" fill="#bfe8cf" />
        </Svg>
        <span className="text-[7px] leading-[7px] text-white">سهل</span>
      </span>
    ),
  },
  {
    name: "Chrome profile",
    state: "open",
    icon: (
      <>
        <Chrome />
        <span className={clsx(badge, "top-[11px] left-3 size-3.5 bg-[#5d4037] text-[8px] text-white")}>B</span>
      </>
    ),
  },
  {
    name: "AnyDesk",
    state: "open",
    icon: (
      <svg width="24" height="24" viewBox="0 0 24 24" aria-hidden="true">
        <path d="M0 0h24v24H0z" fill="#ef443b" />
        <path d="M9 7l5 5-5 5-5-5z" fill="#fff" />
        <path d="M13 7.500l4.500 4.500-4.500 4.500" fill="none" stroke="#fff" strokeWidth="2" />
      </svg>
    ),
  },
  { name: "Excel", icon: <ExcelLogo size={23} />, state: "active" },
  { name: "Photos", icon: <Photos />, state: "open" },
];

function Taskbar() {
  return (
    <footer className="flex h-10 shrink-0 bg-linear-to-r from-[#2b2a27] via-[#2e2d2a] to-[#1c1c1c] text-white">
      <button aria-label="Start" className="flex w-12 items-center justify-center bg-[#1e1e1e]">
        <Svg w={16} h={16}>
          <path d="M0 2.300L7 1.300v6.200H0zM8 1.100l8-1.100v7.500H8zM0 8.500h7v6.200l-7-1zM8 8.500h8V16l-8-1.100z" fill="#fff" stroke="none" />
        </Svg>
      </button>
      <label className="flex w-[344px] items-center border border-[#bdbdbd] bg-[#f2f2f2] pl-[11px] text-[#222]">
        <Svg w={16} h={16}>
          <circle cx="10" cy="6" r="5.300" strokeWidth="1.300" stroke="#111" />
          <path d="M6.200 9.800L.5 15.500" strokeWidth="1.300" stroke="#111" />
        </Svg>
        <input aria-label="Taskbar search" placeholder="Type here to search" className="ml-3 flex-1 bg-transparent text-[14px] outline-none placeholder:text-[#333]" />
      </label>
      <button aria-label="Task view" className="flex w-[50px] items-center justify-center">
        <Svg w={17} h={16}>
          <path d="M1 0v2.500h11V0M1 16v-2.500h11V16M1 5h11v6H1zM15.500 0v3M15.500 8v8" stroke="#fff" strokeWidth="1.200" />
          <path d="M14 4h3v3h-3z" fill="#fff" stroke="none" />
        </Svg>
      </button>
      {apps.map((app) => (
        <button
          key={app.name}
          aria-label={app.name}
          className={clsx("relative flex w-[42px] items-center justify-center", app.state === "active" && "bg-[#4d4d4c]")}
        >
          <span className="relative flex">{app.icon}</span>
          {app.state && (
            <span className={clsx("absolute bottom-0 h-0.5 bg-[#76b9ed]", app.state === "active" ? "inset-x-0" : "inset-x-1")} />
          )}
        </button>
      ))}
      <div className="ml-auto flex items-center text-[12px]">
        <button>EN</button>
        <Svg w={12} h={7} className="ml-4"><path d="M1 6l5-5 5 5" stroke="#fff" strokeWidth="1.300" /></Svg>
        <span className="ml-2 w-3.5 pb-1 text-center font-['Liberation_Serif',serif] text-[28px] leading-6 font-bold text-[#d9232e] italic">e</span>
        <Svg w={16} h={12} className="ml-2.5">
          <path d="M5.500 3.500h9v6h-9zM15.500 5v3" stroke="#fff" />
          <path d="M7 5h6v3H7z" fill="#fff" stroke="none" />
          <path d="M1 1v2M3.500 1v2M.5 3.500h3.500v2H.5zM2.300 6v4h3" stroke="#fff" />
        </Svg>
        <Svg w={12} h={16} className="ml-2.5">
          <path d="M2.500 2.500q3.500-3 7 0M2.500 13.500q3.500 3 7 0M1 5h6.500v6H1zM7.500 7l3.500-1.500v5L7.500 9" stroke="#fff" />
        </Svg>
        <Svg w={17} h={14} className="ml-2">
          <path d="M1 5h2.500L7 2v10L3.500 9H1z" stroke="#fff" />
          <path d="M9 5q1.500 2 0 4M11.500 3.500q2.500 3.500 0 7" stroke="#fff" />
          <path d="M14 2q3.500 5 0 10" stroke="#999" />
        </Svg>
        <Svg w={14} h={14} className="ml-3">
          <path d="M1 9.500Q3.500 3 12.500 2M3.500 11.500q2-5.500 9-6.500M6.500 13q1.500-4 6-5" stroke="#fff" strokeWidth="1.200" />
          <circle cx="11" cy="12" r="1.500" fill="#fff" stroke="none" />
        </Svg>
        <Svg w={23} h={13} className="ml-2">
          <path d="M.6.600h21.800v11.800H.6z" stroke="#fff" strokeWidth="1.200" />
          <path d="M3 3.500h17M3 6.500h17" stroke="#fff" strokeWidth="1.500" strokeDasharray="1.500 1.500" />
          <path d="M5.500 9.500h12" stroke="#fff" strokeWidth="1.200" />
        </Svg>
        <div className="ml-2.5 flex w-[62px] flex-col items-center text-[11px] leading-[18px]">
          <span>12:19 ص</span>
          <span>2024/01/21</span>
        </div>
        <button aria-label="Notifications" className="relative ml-4 w-9">
          <Svg w={17} h={16}>
            <path d="M0 0h16v12H4l-4 3z" fill="#fff" stroke="none" />
            <path d="M2.500 3.500h11M2.500 6h11M2.500 8.500h6" stroke="#222" />
          </Svg>
          <span className={clsx(badge, "top-1.5 left-1.5 size-[18px] border border-[#999] bg-[#3a3a3a] text-[11px] font-semibold")}>15</span>
        </button>
        <span className="mr-1 h-10 w-px bg-[#666]" />
      </div>
    </footer>
  );
}

function Watermark() {
  return (
    <div aria-hidden="true" className="pointer-events-none absolute bottom-4 left-1/2 flex -translate-x-1/2 flex-col items-center font-bold text-[#bfbfbf]/45">
      <span className="font-['DejaVu_Sans',sans-serif] text-[48px] leading-[50px]">مستقل</span>
      <span className="text-[25px] leading-6">mostaql.com</span>
    </div>
  );
}

export default function App() {
  return (
    <div className="relative flex h-screen flex-col overflow-hidden bg-[#efefef] font-['Open_Sans','DejaVu_Sans_Condensed','DejaVu_Sans',sans-serif] text-[#242424]">
      <TitleBar />
      <RibbonTabs />
      <Ribbon />
      <FormulaBar />
      <Sheet />
      <SheetTabs />
      <StatusBar />
      <Taskbar />
      <Watermark />
    </div>
  );
}
